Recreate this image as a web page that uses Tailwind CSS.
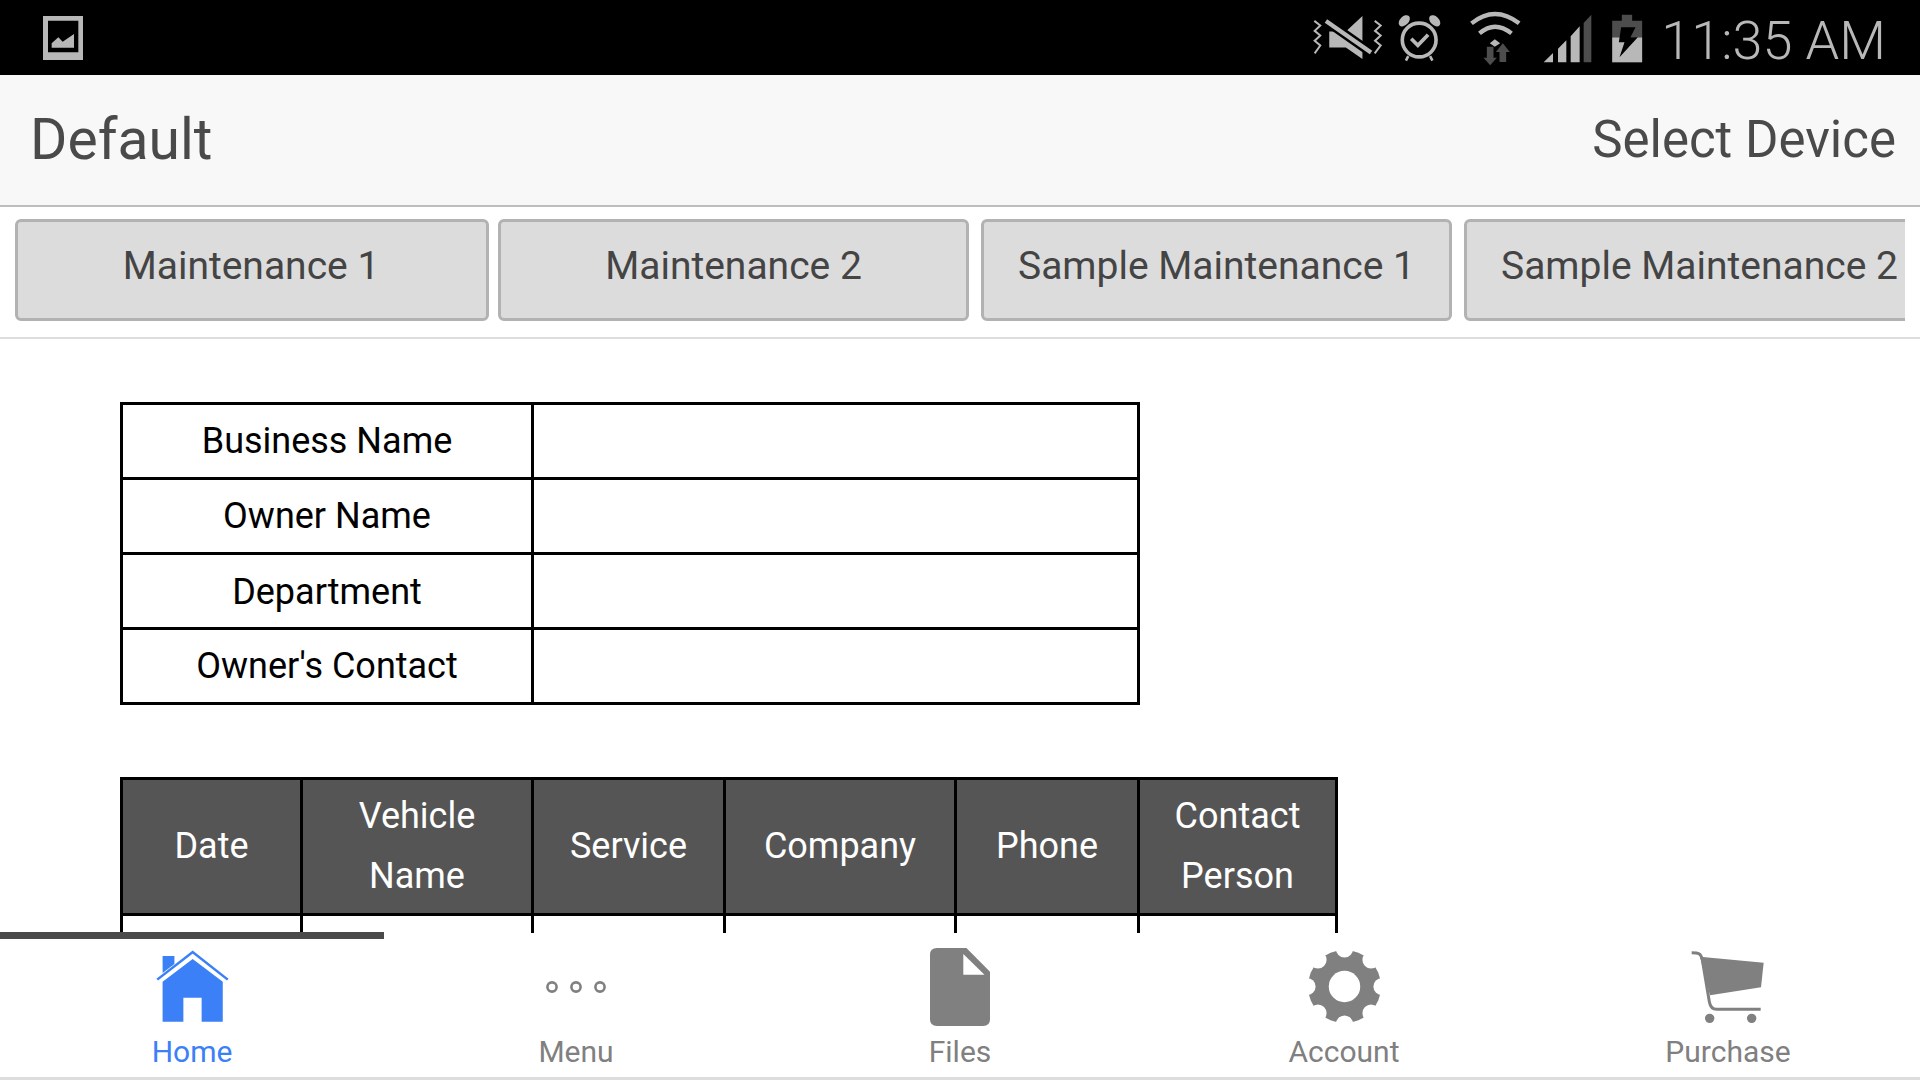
<!DOCTYPE html>
<html lang="en">
<head>
    <meta charset="UTF-8">
    <meta name="viewport" content="width=device-width, initial-scale=1.0">
    <title>Default</title>
    <script src="https://cdn.jsdelivr.net/npm/@tailwindcss/browser@4"></script>
</head>
<body class="bg-white overflow-hidden font-[family-name:Roboto,sans-serif]">
<div class="w-[1920px] h-[1080px] flex flex-col overflow-hidden">

    <!-- Status bar -->
    <div class="h-[75px] shrink-0 bg-black flex items-center pl-[43px] pr-[34px] text-[#b8b8b8]">
        <svg width="40" height="44" viewBox="129 48 120 132" class="mt-[1px]">
            <path fill="#b8b8b8" fill-rule="evenodd" d="M129 48H249V180H129ZM144 62V157H235V62Z"/>
            <path fill="#b8b8b8" d="M155 143V130L175 112L188 125L222 102V143Z"/>
        </svg>
        <div class="flex-1"></div>
        <!-- muted speaker -->
        <svg width="73" height="47" viewBox="60 40 220 140" class="mt-[-1px]">
            <path fill="#b8b8b8" d="M115 92H165L215 45V175L165 140H115Z"/>
            <path stroke="#000" stroke-width="28" d="M100 56L245 158"/>
            <path stroke="#b8b8b8" stroke-width="13" d="M105 60L241 155"/>
            <path fill="none" stroke="#b8b8b8" stroke-width="6" d="M70 60L88 74L71 90L88 104L71 120L88 134L71 158"/>
            <path fill="none" stroke="#b8b8b8" stroke-width="6" d="M252 60L270 74L253 90L270 104L253 120L270 134L252 158"/>
        </svg>
        <!-- alarm -->
        <svg width="48" height="54" viewBox="315 35 145 160" class="ml-[12px] mt-[2px]">
            <circle cx="385" cy="118" r="51" fill="none" stroke="#b8b8b8" stroke-width="11"/>
            <path fill="none" stroke="#b8b8b8" stroke-width="11" d="M361 114L381 134L412 102"/>
            <ellipse cx="340" cy="60" rx="20" ry="13" transform="rotate(-45 340 60)" fill="#b8b8b8"/>
            <ellipse cx="432" cy="60" rx="20" ry="13" transform="rotate(45 432 60)" fill="#b8b8b8"/>
            <path stroke="#b8b8b8" stroke-width="8" d="M352 167L345 180M418 167L425 180"/>
        </svg>
        <!-- wifi -->
        <svg width="52" height="56" viewBox="535 25 155 168" class="ml-[25px] mt-[2px]">
            <path fill="none" stroke="#b8b8b8" stroke-width="13" d="M542 62Q612 6 685 62"/>
            <path fill="none" stroke="#b8b8b8" stroke-width="13" d="M566 92Q612 52 662 92"/>
            <path fill="#b8b8b8" d="M597 122L612 110L628 122L612 132Z"/>
            <path fill="#4d4d4d" d="M588 132H608V165H618L598 188L578 165H588Z"/>
            <path fill="#4d4d4d" d="M626 178V148H615L636 122L657 148H646V178Z"/>
        </svg>
        <!-- signal -->
        <svg width="50" height="49" viewBox="755 38 150 147" class="ml-[22px] mt-[2px]">
            <path fill="#b8b8b8" d="M757 183L785 155V183ZM800 183V142L825 117V183ZM838 183V105L865 75V183Z"/>
            <path fill="#4d4d4d" d="M877 183V65L900 40V183Z"/>
        </svg>
        <!-- battery -->
        <svg width="32" height="49" viewBox="960 35 95 147" class="ml-[18px] mt-[2px]">
            <path fill="#4d4d4d" d="M992 37H1023V55H1053V105H963V55H992Z"/>
            <path fill="#b8b8b8" d="M963 105H1053V180H963Z"/>
            <path fill="#000" d="M990 75H1033L1018 105H1040L985 165L1000 120H983Z"/>
        </svg>
        <span class="ml-[18px] mt-[6px] text-[54px] leading-none font-light whitespace-nowrap">11:35 AM</span>
    </div>

    <!-- Header -->
    <div class="h-[132px] shrink-0 bg-[#f8f8f8] border-b-2 border-[#bdbdbd] flex items-center justify-between pl-[30px] pr-[24px] pb-[2px] text-[#4a4a4a]">
        <span class="text-[57px] leading-none">Default</span>
        <span class="text-[51px] leading-none">Select Device</span>
    </div>

    <!-- Maintenance tabs -->
    <div class="h-[132px] shrink-0 border-b-2 border-[#dddddd] pt-[12px] pl-[15px] pr-[15px]">
        <div class="flex overflow-hidden">
            <div class="w-[474px] h-[102px] shrink-0 pb-[7px] pr-[2px] bg-[#dcdcdc] border-[3px] border-[#b2b2b2] rounded-[6px] flex items-center justify-center text-[39px] text-[#444444] whitespace-nowrap">Maintenance 1</div>
            <div class="w-[471px] h-[102px] shrink-0 ml-[9px] pb-[7px] bg-[#dcdcdc] border-[3px] border-[#b2b2b2] rounded-[6px] flex items-center justify-center text-[39px] text-[#444444] whitespace-nowrap">Maintenance 2</div>
            <div class="w-[471px] h-[102px] shrink-0 ml-[12px] pb-[7px] bg-[#dcdcdc] border-[3px] border-[#b2b2b2] rounded-[6px] flex items-center justify-center text-[39px] text-[#444444] whitespace-nowrap">Sample Maintenance 1</div>
            <div class="w-[473px] h-[102px] shrink-0 ml-[12px] pb-[7px] pr-[2px] bg-[#dcdcdc] border-[3px] border-[#b2b2b2] rounded-[6px] flex items-center justify-center text-[39px] text-[#444444] whitespace-nowrap">Sample Maintenance 2</div>
        </div>
    </div>

    <!-- Scrolling content -->
    <div class="flex-1 min-h-0 overflow-hidden pl-[120px] pt-[63px]">
        <table class="table-fixed border-collapse w-[1017px] text-[36px] text-black text-center">
            <colgroup><col class="w-[411px]"><col class="w-[606px]"></colgroup>
            <tbody>
                <tr class="h-[75px]"><td class="border-[3px] border-black">Business Name</td><td class="border-[3px] border-black"></td></tr>
                <tr class="h-[75px]"><td class="border-[3px] border-black">Owner Name</td><td class="border-[3px] border-black"></td></tr>
                <tr class="h-[75px]"><td class="border-[3px] border-black pt-[2px]">Department</td><td class="border-[3px] border-black"></td></tr>
                <tr class="h-[75px]"><td class="border-[3px] border-black">Owner's Contact</td><td class="border-[3px] border-black"></td></tr>
            </tbody>
        </table>

        <table class="table-fixed border-collapse w-[1215px] mt-[72px] text-[36px] text-center">
            <colgroup>
                <col class="w-[180px]"><col class="w-[231px]"><col class="w-[192px]">
                <col class="w-[231px]"><col class="w-[183px]"><col class="w-[198px]">
            </colgroup>
            <thead>
                <tr class="h-[136px] bg-[#555555] text-white leading-[60px]">
                    <th class="border-[3px] border-black font-normal pb-[2px]">Date</th>
                    <th class="border-[3px] border-black font-normal pb-[2px]">Vehicle<br>Name</th>
                    <th class="border-[3px] border-black font-normal pb-[2px]">Service</th>
                    <th class="border-[3px] border-black font-normal pb-[2px]">Company</th>
                    <th class="border-[3px] border-black font-normal pb-[2px]">Phone</th>
                    <th class="border-[3px] border-black font-normal pb-[2px]">Contact<br>Person</th>
                </tr>
            </thead>
            <tbody>
                <tr class="h-[75px]">
                    <td class="border-[3px] border-black"></td><td class="border-[3px] border-black"></td><td class="border-[3px] border-black"></td>
                    <td class="border-[3px] border-black"></td><td class="border-[3px] border-black"></td><td class="border-[3px] border-black"></td>
                </tr>
            </tbody>
        </table>
    </div>

    <!-- Bottom navigation -->
    <nav class="relative h-[147px] shrink-0 bg-white border-b-[3px] border-[#dddddd] grid grid-cols-5 text-[30px] leading-[30px] text-[#808080]">
        <div class="absolute left-0 -top-[1px] w-[384px] h-[7px] bg-[#4a4a4a]"></div>
        <div class="flex flex-col items-center pt-[16px] text-[#3b80f7]">
            <div class="h-[75px] flex items-center justify-center">
                <svg width="77" height="75" viewBox="150 570 215 225" preserveAspectRatio="none">
                    <path fill="#3b80f7" d="M174 668L258 600L342 668V788H283V716H232V788H174Z"/>
                    <path fill="#3b80f7" d="M174 591H207V615L174 642Z"/>
                    <path fill="none" stroke="#3b80f7" stroke-width="7" d="M159 662L258 579L356 662"/>
                </svg>
            </div>
            <span class="mt-[13px]">Home</span>
        </div>
        <div class="flex flex-col items-center pt-[16px]">
            <div class="h-[75px] flex items-center justify-center">
                <svg width="60" height="14" viewBox="0 0 60 14">
                    <circle cx="6" cy="7" r="4.6" fill="none" stroke="#808080" stroke-width="2.6"/>
                    <circle cx="30" cy="7" r="4.6" fill="none" stroke="#808080" stroke-width="2.6"/>
                    <circle cx="54" cy="7" r="4.6" fill="none" stroke="#808080" stroke-width="2.6"/>
                </svg>
            </div>
            <span class="mt-[13px]">Menu</span>
        </div>
        <div class="flex flex-col items-center pt-[16px]">
            <div class="h-[75px] flex items-center justify-center">
                <svg width="60" height="78" viewBox="145 84 173 234" preserveAspectRatio="none">
                    <path fill="#808080" d="M165 84H250L318 155V298Q318 318 298 318H165Q145 318 145 298V104Q145 84 165 84Z"/>
                    <path fill="#fff" d="M241 102V164H302Z"/>
                </svg>
            </div>
            <span class="mt-[13px]">Files</span>
        </div>
        <div class="flex flex-col items-center pt-[16px]">
            <div class="h-[75px] flex items-center justify-center">
                <svg width="75" height="75" viewBox="0 0 74 74">
                    <circle cx="37" cy="37" r="36" fill="#808080"/>
                    <circle cx="37" cy="37" r="15.5" fill="#fff"/>
                    <g fill="#fff">
                        <circle cx="37" cy="0" r="8.5"/><circle cx="37" cy="74" r="8.5"/>
                        <circle cx="0" cy="37" r="8.5"/><circle cx="74" cy="37" r="8.5"/>
                        <circle cx="10.8" cy="10.8" r="8.5"/><circle cx="63.2" cy="10.8" r="8.5"/>
                        <circle cx="10.8" cy="63.2" r="8.5"/><circle cx="63.2" cy="63.2" r="8.5"/>
                    </g>
                </svg>
            </div>
            <span class="mt-[13px]">Account</span>
        </div>
        <div class="flex flex-col items-center pt-[16px]">
            <div class="h-[75px] flex items-center justify-center -ml-[2px]">
                <svg width="75" height="74" viewBox="390 90 225 222">
                    <path fill="#808080" d="M420 110L611 128L603 202L450 226Z"/>
                    <path fill="none" stroke="#808080" stroke-width="9" d="M395 98C415 98 423 100 427 120L448 245Q452 268 470 268H602"/>
                    <circle cx="449" cy="295" r="14" fill="#808080"/>
                    <circle cx="575" cy="295" r="14" fill="#808080"/>
                </svg>
            </div>
            <span class="mt-[13px]">Purchase</span>
        </div>
    </nav>
</div>
</body>
</html>
